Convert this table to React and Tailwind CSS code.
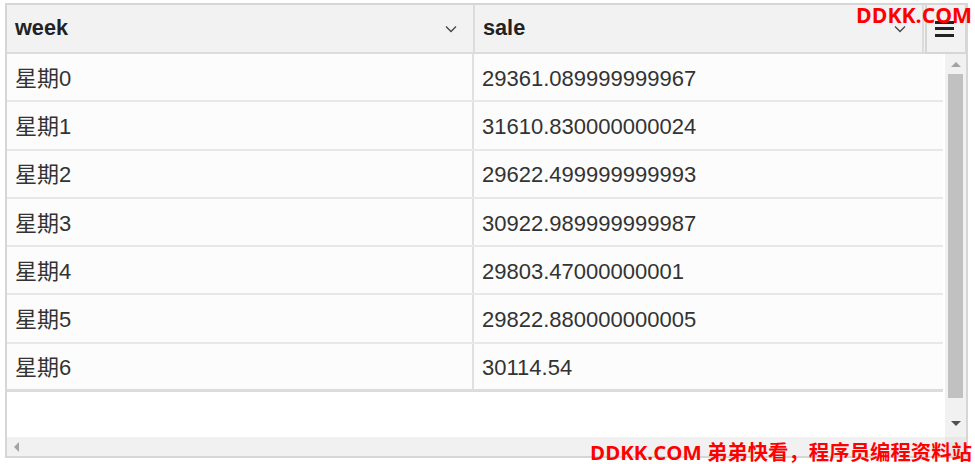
import React from "react";

const rows = [
  ["星期0", "29361.089999999967"],
  ["星期1", "31610.830000000024"],
  ["星期2", "29622.499999999993"],
  ["星期3", "30922.989999999987"],
  ["星期4", "29803.47000000001"],
  ["星期5", "29822.880000000005"],
  ["星期6", "30114.54"],
];

function Chevron() {
  return (
    <svg width="12" height="8" viewBox="0 0 12 8" className="shrink-0">
      <path d="M1 1.5 L6 6.5 L11 1.5" fill="none" stroke="#444" strokeWidth="1.3" />
    </svg>
  );
}

export default function App() {
  const font = { fontFamily: '"Liberation Sans", Arial, "Noto Sans CJK SC", sans-serif' };
  const wm = { fontFamily: '"Open Sans", "Noto Sans CJK SC", sans-serif' };
  return (
    <div className="relative w-[975px] h-[464px] bg-white overflow-hidden" style={font}>
      <div className="ml-[5px] mt-[3px] w-[963px] h-[455px] border-2 border-[#d6d6d6] flex flex-col">
        {/* header */}
        <div className="h-[49px] flex bg-[#f2f2f2] border-b-2 border-[#dcdcdc] shrink-0">
          <div className="w-[468px] border-r-2 border-[#dcdcdc] flex items-center justify-between pl-[8px] pr-[16px]">
            <span className="text-[21.7px] font-bold text-[#222]">week</span>
            <Chevron />
          </div>
          <div className="w-[449px] border-r-2 border-[#dcdcdc] flex items-center justify-between pl-[8px] pr-[16px]">
            <span className="text-[21.7px] font-bold text-[#222]">sale</span>
            <Chevron />
          </div>
        </div>
        {/* body */}
        <div className="flex h-[383px] shrink-0">
          <div className="w-[936px] flex flex-col bg-white">
            {rows.map((r, i) => (
              <div
                key={i}
                className={
                  "h-[48.3px] flex bg-[#fcfcfc] " +
                  (i === rows.length - 1 ? "border-b-[3px] border-[#dcdcdc]" : "border-b-2 border-[#e8e8e8]")
                }
              >
                <div className="w-[467px] border-r-2 border-[#e0e0e0] flex items-center pl-[8px] pt-[2px] text-[22px] text-[#333]">
                  {r[0]}
                </div>
                <div className="flex-1 flex items-center pl-[8px] pt-[2px] text-[22px] text-[#333]">{r[1]}</div>
              </div>
            ))}
          </div>
          <div className="w-[2px]" />
          <div className="w-[21px] bg-[#f1f1f1] flex flex-col items-center">
            <div className="h-[20px] flex items-center justify-center">
              <div className="w-0 h-0 border-l-[5px] border-r-[5px] border-b-[5px] border-l-transparent border-r-transparent border-b-[#a3a3a3]" />
            </div>
            <div className="w-[15px] h-[324px] bg-[#c1c1c1]" />
            <div className="flex-1 flex items-end justify-center pb-[11px]">
              <div className="w-0 h-0 border-l-[5px] border-r-[5px] border-t-[5px] border-l-transparent border-r-transparent border-t-[#505050]" />
            </div>
          </div>
        </div>
        {/* horizontal scrollbar */}
        <div className="flex-1 flex">
          <div className="w-[938px] bg-[#f1f1f1] flex items-center pl-[7px]">
            <div className="w-0 h-0 border-t-[5px] border-b-[5px] border-r-[5px] border-t-transparent border-b-transparent border-r-[#a3a3a3]" />
          </div>
          <div className="flex-1 bg-[#e8e8e8]" />
        </div>
      </div>

      {/* column menu button */}
      <div className="absolute left-[925px] top-[3px] w-[42px] h-[51px] border-2 border-[#d6d6d6] bg-[#f2f2f2] flex flex-col items-center justify-center gap-[3.5px] pr-[3px]">
        <div className="w-[19px] h-[3px] bg-[#222]" />
        <div className="w-[19px] h-[3px] bg-[#222]" />
        <div className="w-[19px] h-[3px] bg-[#222]" />
      </div>

      {/* watermarks */}
      <div className="absolute right-[3px] top-[3px] text-[21.2px] font-bold text-[#ff0000] leading-[24px]" style={wm}>
        DDKK.COM
      </div>
      <div className="absolute right-[3px] top-[441px] text-[20.4px] font-bold text-[#ff0000] leading-[22px] whitespace-nowrap" style={wm}>
        DDKK.COM 弟弟快看，程序员编程资料站
      </div>
    </div>
  );
}
